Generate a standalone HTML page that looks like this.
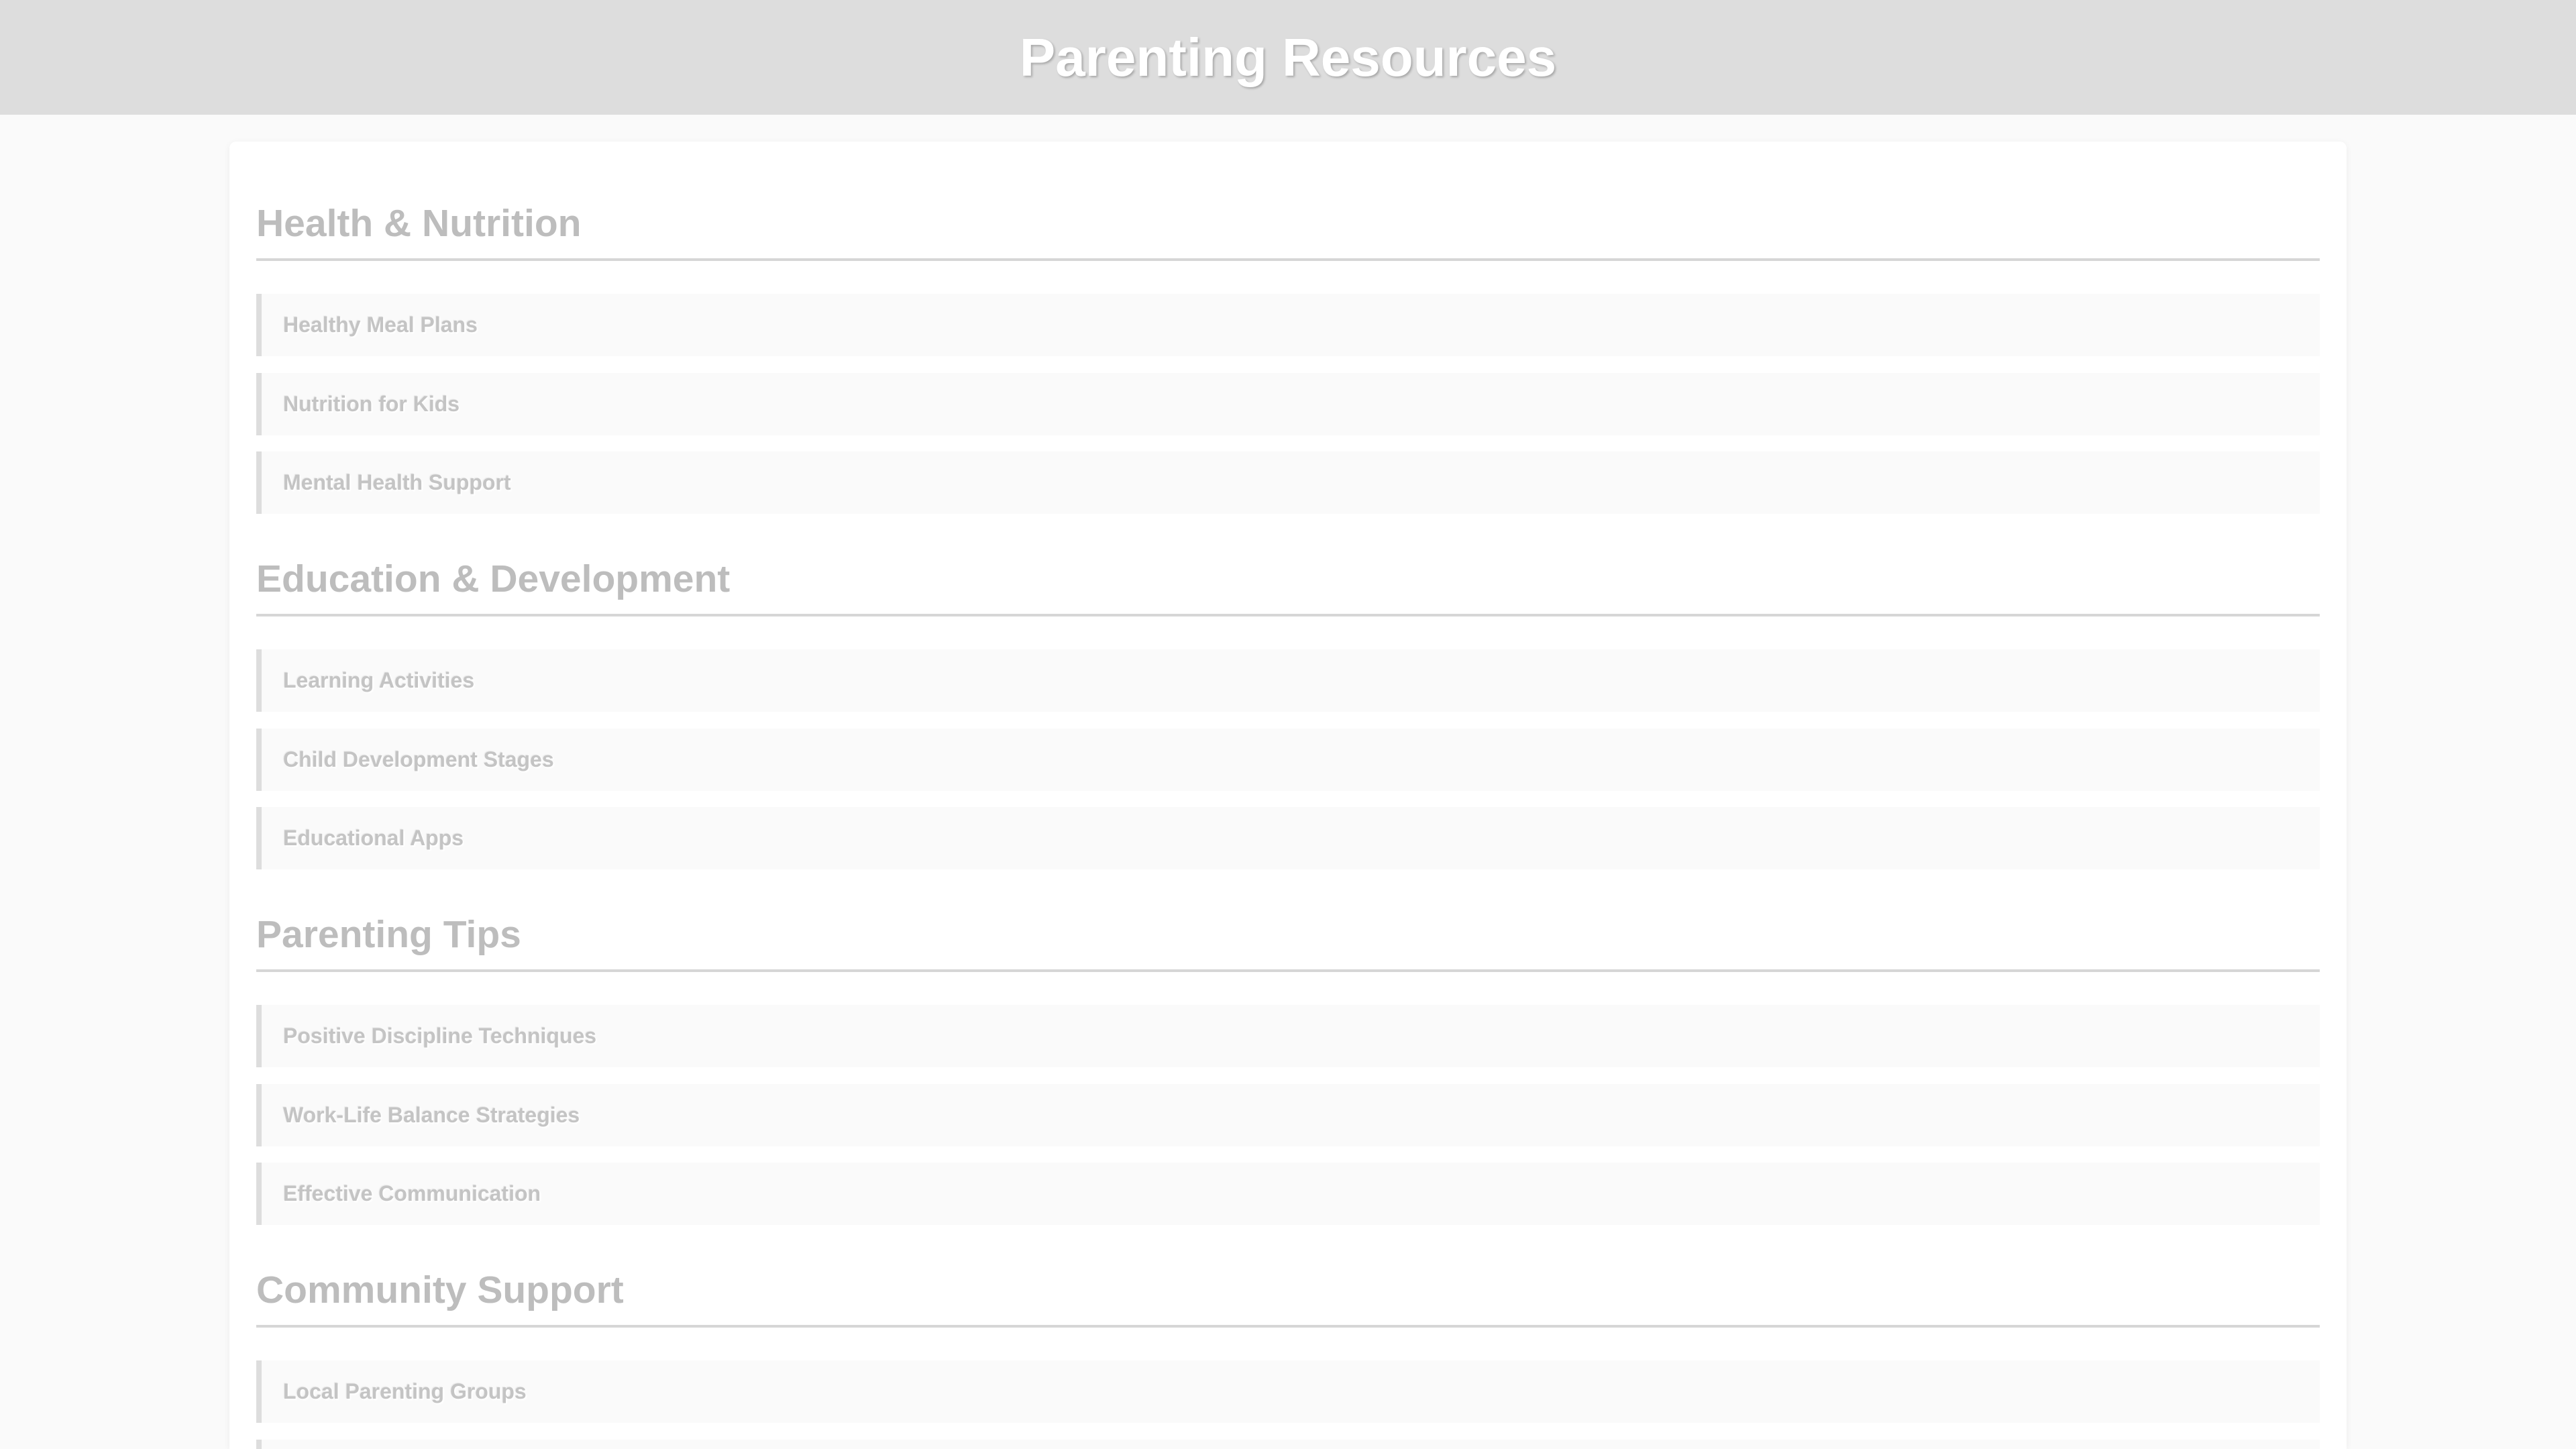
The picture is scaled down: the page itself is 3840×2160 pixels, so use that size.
<!DOCTYPE html>
<html><head><meta charset="utf-8"><style>
*{box-sizing:border-box;margin:0;padding:0}
html,body{width:3840px;height:2160px;overflow:hidden;background:#fafafa;font-family:"Liberation Sans",Arial,sans-serif}
header{height:171px;background:#dddddd;text-align:center;color:#fff;font-weight:bold;font-size:80px;line-height:171px;text-shadow:2px 2px 3px rgba(0,0,0,0.25)}
.c{position:absolute;left:342px;top:211px;width:3156px;height:1949px;overflow:hidden;background:#fff;border-radius:10px 10px 0 0;box-shadow:0 2px 10px rgba(0,0,0,0.06);padding:25px 40px 0 40px}
h2{margin-top:62px;height:91px;line-height:70px;padding-bottom:17px;border-bottom:4px solid #d6d6d6;font-size:57px;color:#bdbdbd;font-weight:bold;text-shadow:1px 1px 1px #fff}
ul{list-style:none;margin-top:49px}
li{height:93px;margin-bottom:24.5px;background:#fafafa;border-left:8px solid #dddddd;padding-left:32px;line-height:93px;font-size:32px;font-weight:bold;color:#c4c4c4;text-shadow:2px 2px 2px #fff,-1px -1px 1px #e8e8e8}
</style></head><body>
<header>Parenting Resources</header>
<div class="c">
<h2>Health &amp; Nutrition</h2>
<ul><li>Healthy Meal Plans</li><li>Nutrition for Kids</li><li>Mental Health Support</li></ul>
<h2>Education &amp; Development</h2>
<ul><li>Learning Activities</li><li>Child Development Stages</li><li>Educational Apps</li></ul>
<h2>Parenting Tips</h2>
<ul><li>Positive Discipline Techniques</li><li>Work-Life Balance Strategies</li><li>Effective Communication</li></ul>
<h2>Community Support</h2>
<ul><li>Local Parenting Groups</li><li>Online Forums</li><li>Support Hotlines</li></ul>
</div>
</body></html>
